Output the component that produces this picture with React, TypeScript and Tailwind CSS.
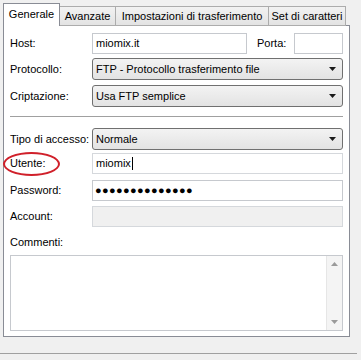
import React from "react";

const font = { fontFamily: '"Liberation Sans", Arial, sans-serif' };

function Arrow() {
  return (
    <svg width="7" height="4" viewBox="0 0 7 4" className="shrink-0">
      <path d="M0 0 H7 L3.5 4 Z" fill="#1a1a1a" />
    </svg>
  );
}

function Select({ value }: { value: string }) {
  return (
    <div className="h-[22px] flex-1 rounded-[3px] border border-[#707070] bg-gradient-to-b from-[#f3f3f3] to-[#e3e3e3] flex items-center pl-[3px] pr-[6px]">
      <span className="flex-1 text-[11px] text-black leading-none whitespace-nowrap">{value}</span>
      <Arrow />
    </div>
  );
}

function Label({ children }: { children: React.ReactNode }) {
  return (
    <div className="w-[82px] shrink-0 text-[11px] text-black leading-none whitespace-nowrap">{children}</div>
  );
}

export default function App() {
  return (
    <div className="w-[361px] h-[360px] bg-[#f0f0f0] relative overflow-hidden" style={font}>
      <div className="pt-[3px] pl-[3px]">
        {/* Tabs */}
        <div className="flex items-end h-[23px] relative z-10 whitespace-nowrap text-[11px]">
          <div className="h-[23px] w-[57px] bg-white border border-[#898c95] border-b-0 flex items-center justify-center text-black pb-[2px]">
            Generale
          </div>
          <div className="h-[20px] w-[56px] bg-gradient-to-b from-[#f2f2f2] to-[#e3e3e3] border border-[#acacac] border-l-0 flex items-center justify-center text-black">
            Avanzate
          </div>
          <div className="h-[20px] w-[153px] bg-gradient-to-b from-[#f2f2f2] to-[#e3e3e3] border border-[#acacac] border-l-0 flex items-center justify-center text-black">
            Impostazioni di trasferimento
          </div>
          <div className="h-[20px] w-[77px] bg-gradient-to-b from-[#f2f2f2] to-[#e3e3e3] border border-[#acacac] border-l-0 flex items-center justify-center text-black">
            Set di caratteri
          </div>
        </div>
        {/* Panel */}
        <div className="-mt-px w-[347px] h-[312px] bg-white border border-[#898c95] pl-[6px] pr-[6px] flex flex-col">
          <div className="mt-[7px] flex items-center h-[21px]">
            <Label>Host:</Label>
            <div className="w-[155px] h-[21px] border border-[#c6c9ce] bg-white flex items-center pl-[3px] text-[11px]">
              miomix.it
            </div>
            <div className="ml-[10px] w-[37px] text-[11px] leading-none">Porta:</div>
            <div className="w-[49px] h-[21px] border border-[#c6c9ce] bg-white" />
          </div>
          <div className="mt-[4px] flex items-center">
            <Label>Protocollo:</Label>
            <Select value="FTP - Protocollo trasferimento file" />
          </div>
          <div className="mt-[5px] flex items-center">
            <Label>Criptazione:</Label>
            <Select value="Usa FTP semplice" />
          </div>
          <div className="mt-[9px] h-px bg-[#a0a0a0] border-b border-white box-content" />
          <div className="mt-[10px] flex items-center">
            <Label>Tipo di accesso:</Label>
            <Select value="Normale" />
          </div>
          <div className="mt-[3px] flex items-center h-[21px]">
            <Label>Utente:</Label>
            <div className="flex-1 h-[21px] border border-[#d5d8dc] bg-white flex items-center pl-[3px] text-[11px]">
              miomix<span className="inline-block w-px h-[13px] bg-black ml-px" />
            </div>
          </div>
          <div className="mt-[6px] flex items-center h-[21px]">
            <Label>Password:</Label>
            <div className="flex-1 h-[21px] border border-[#c6c9ce] bg-white flex items-center pl-[2px] text-[11px] tracking-[0.35px] text-black leading-none">
              ●●●●●●●●●●●●●●
            </div>
          </div>
          <div className="mt-[5px] flex items-center h-[21px]">
            <Label>Account:</Label>
            <div className="flex-1 h-[21px] border border-[#d5d8dc] bg-[#f0f0f0]" />
          </div>
          <div className="mt-[10px] text-[11px] leading-none">Commenti:</div>
          <div className="mt-[7px] h-[76px] border border-[#c6c9ce] bg-white flex justify-end">
            <div className="w-[16px] h-full bg-[#f4f4f4] border-l border-[#e6e6e6] flex flex-col items-center justify-between py-[6px]">
              <svg width="7" height="4" viewBox="0 0 7 4">
                <path d="M0 4 H7 L3.5 0 Z" fill="#9a9a9a" />
              </svg>
              <svg width="7" height="4" viewBox="0 0 7 4">
                <path d="M0 0 H7 L3.5 4 Z" fill="#9a9a9a" />
              </svg>
            </div>
          </div>
        </div>
      </div>
      <div className="mt-[16px] w-[357px] h-px bg-[#a0a0a0]" />
      {/* red ellipse annotation */}
      <div className="absolute left-[3px] top-[152px] w-[57px] h-[24px] rounded-[50%] border-2 border-[#d0202a]" />
    </div>
  );
}
